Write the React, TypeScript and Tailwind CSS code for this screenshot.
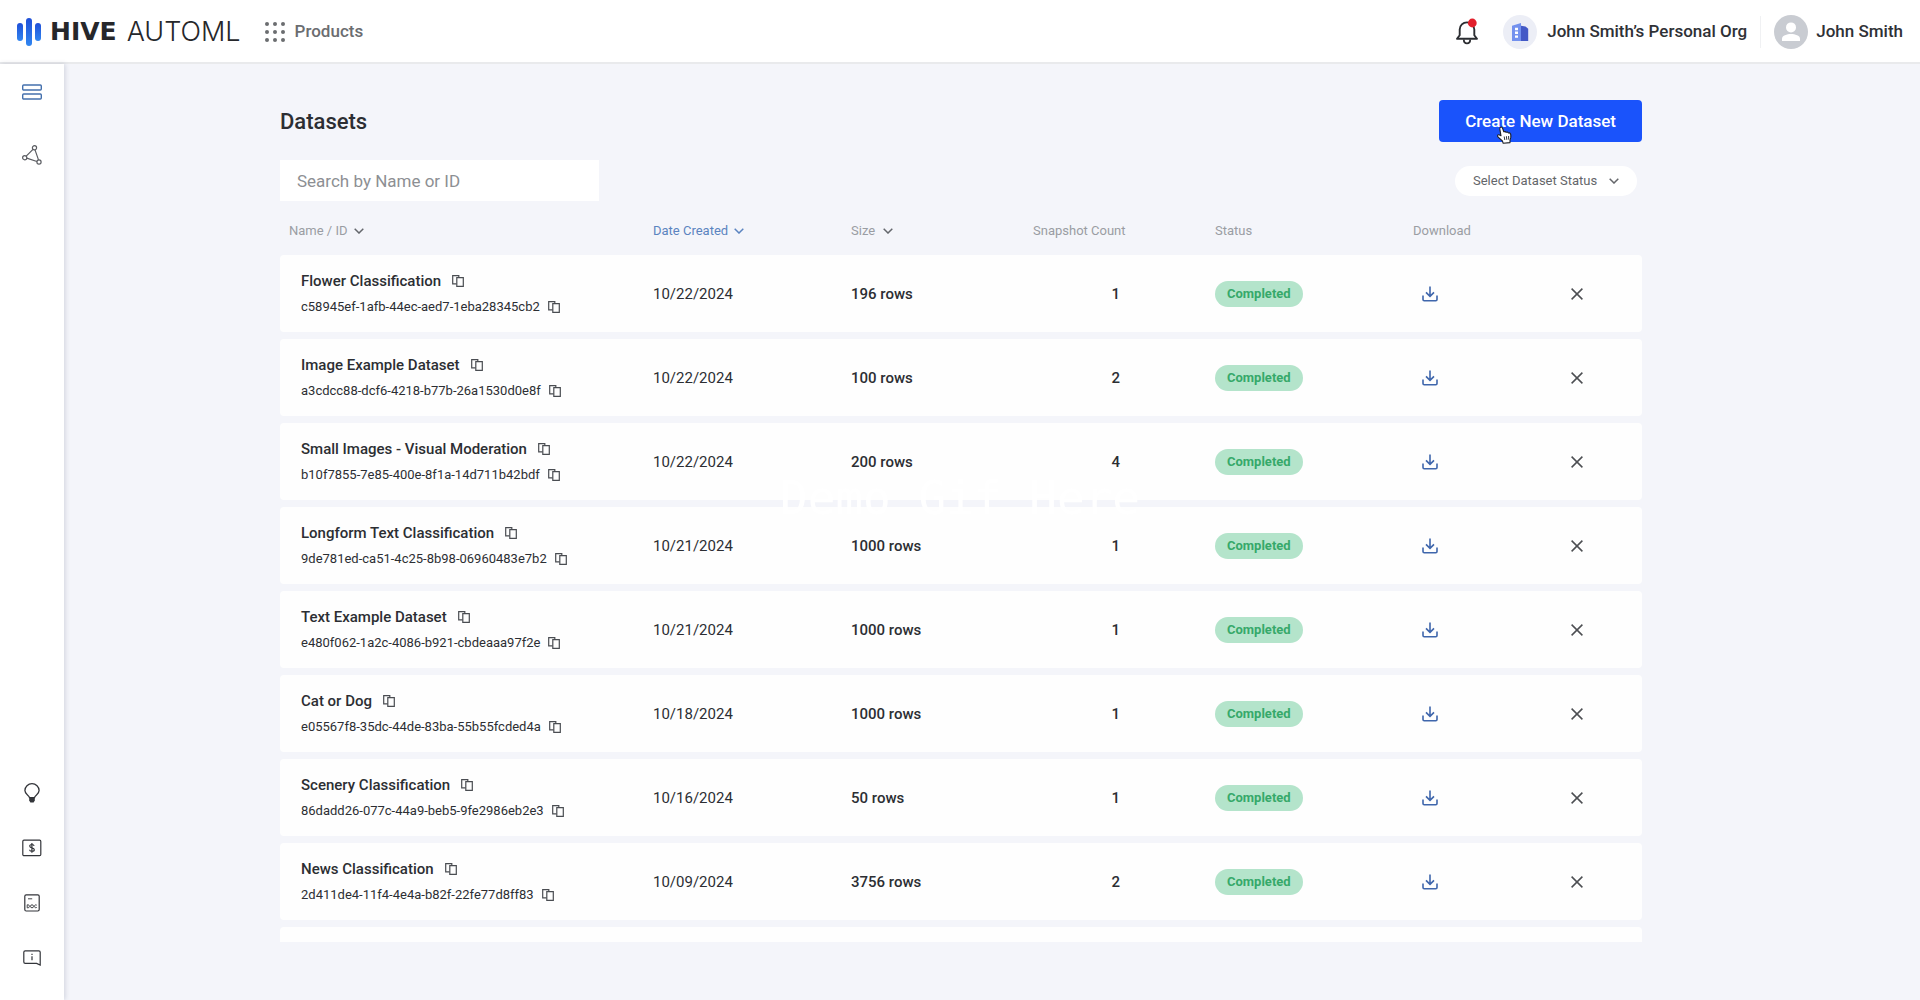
import type { ReactNode } from "react";

type Dataset = {
  name: string;
  id: string;
  created: string;
  rows: number;
  snapshots: number;
};

const DATASETS: Dataset[] = [
  { name: "Flower Classification", id: "c58945ef-1afb-44ec-aed7-1eba28345cb2", created: "10/22/2024", rows: 196, snapshots: 1 },
  { name: "Image Example Dataset", id: "a3cdcc88-dcf6-4218-b77b-26a1530d0e8f", created: "10/22/2024", rows: 100, snapshots: 2 },
  { name: "Small Images - Visual Moderation", id: "b10f7855-7e85-400e-8f1a-14d711b42bdf", created: "10/22/2024", rows: 200, snapshots: 4 },
  { name: "Longform Text Classification", id: "9de781ed-ca51-4c25-8b98-06960483e7b2", created: "10/21/2024", rows: 1000, snapshots: 1 },
  { name: "Text Example Dataset", id: "e480f062-1a2c-4086-b921-cbdeaaa97f2e", created: "10/21/2024", rows: 1000, snapshots: 1 },
  { name: "Cat or Dog", id: "e05567f8-35dc-44de-83ba-55b55fcded4a", created: "10/18/2024", rows: 1000, snapshots: 1 },
  { name: "Scenery Classification", id: "86dadd26-077c-44a9-beb5-9fe2986eb2e3", created: "10/16/2024", rows: 50, snapshots: 1 },
  { name: "News Classification", id: "2d411de4-11f4-4e4a-b82f-22fe77d8ff83", created: "10/09/2024", rows: 3756, snapshots: 2 },
];

function ChevronIcon({ className }: { className?: string }) {
  return (
    <svg viewBox="0 0 10 6" fill="none" stroke="currentColor" strokeWidth="1.5" className={className} aria-hidden="true">
      <path d="M0.7 0.7 5 5 9.3 0.7" />
    </svg>
  );
}

function CopyButton({ label }: { label: string }) {
  return (
    <button type="button" aria-label={label} className="text-[#4a4d52]">
      <svg viewBox="0 0 12 12" fill="none" stroke="currentColor" strokeWidth="1.2" className="size-3" aria-hidden="true">
        <path d="M4.6 8.8H0.7V0.6H6.8V2.6" />
        <path d="M4.8 2.7H11.3V11.3H4.8Z" />
      </svg>
    </button>
  );
}

function SidebarLink({ label, children }: { label: string; children: ReactNode }) {
  return (
    <a href="#" aria-label={label} className="flex size-6 items-center justify-center">
      {children}
    </a>
  );
}

function Header() {
  return (
    <header className="flex h-16 shrink-0 items-center justify-between border-b-2 border-[#e9eaec] bg-white pt-0.5 pr-[17px] pl-4">
      <div className="flex items-center">
        <a href="#" aria-label="Hive AutoML" className="flex items-center leading-8 text-[#26272b]">
          <svg viewBox="0 0 26 28" className="mr-2 h-7 w-[26px]" aria-hidden="true">
            <defs>
              <linearGradient id="hive" x1="0" y1="0" x2="0" y2="1">
                <stop offset="0" stopColor="#1f4fd8" />
                <stop offset="1" stopColor="#3186f0" />
              </linearGradient>
            </defs>
            <rect x="1" y="5" width="6" height="18" rx="3" fill="url(#hive)" />
            <rect x="10" y="0" width="6" height="28" rx="3" fill="url(#hive)" />
            <rect x="19" y="5" width="6" height="18" rx="3" fill="url(#hive)" />
          </svg>
          <span className="mr-2.5 font-[DejaVu_Sans,sans-serif] text-[25px] font-bold">HIVE</span>
          <span className="font-[Inter] text-[27px] font-light">AUTOML</span>
        </a>
        <button type="button" className="ml-6 flex items-center gap-2.5 text-[17px] font-medium text-[#6b6d70]">
          <svg viewBox="0 0 20 20" fill="currentColor" className="size-5" aria-hidden="true">
            {[2, 10, 18].map((y) => [2, 10, 18].map((x) => <circle key={`${x}-${y}`} cx={x} cy={y} r="2" />))}
          </svg>
          Products
        </button>
      </div>

      <div className="flex items-center text-[17px] font-medium text-[#2f3136]">
        <button type="button" aria-label="Notifications" className="mr-6">
          <svg viewBox="0 0 24 28" fill="none" className="h-7 w-6" aria-hidden="true">
            <path d="M2 20.8H22L19.3 17.2V11.6C19.3 7.2 16 4.4 12 4.4S4.7 7.2 4.7 11.6V17.2Z" stroke="#2b2d31" strokeWidth="1.9" strokeLinejoin="round" />
            <path d="M8.8 21.5C8.8 26.6 15.2 26.6 15.2 21.5" stroke="#2b2d31" strokeWidth="1.8" />
            <circle cx="17.3" cy="5" r="4.4" fill="#e2202c" />
          </svg>
        </button>
        <button type="button" className="flex items-center gap-2.5">
          <span className="flex size-[34px] items-center justify-center rounded-full bg-[#eceef6]">
            <svg viewBox="0 0 18 20" className="h-5 w-[18px]" aria-hidden="true">
              <path d="M1 3.8 10 1V19H1Z" fill="#7391ee" />
              <path d="M10 3.8 14.5 4.4 17.2 6.8V19H10Z" fill="#4359c6" />
              <path d="M4 5.8h3v2.4h-3ZM4 9.6h3v2.4h-3ZM4 13.4h3v2.4h-3Z" fill="#fff" />
            </svg>
          </span>
          John Smith’s Personal Org
        </button>
        <span className="mx-[13px] h-8 w-px bg-[#f0f1f3]" />
        <button type="button" className="flex items-center gap-2">
          <svg viewBox="0 0 34 34" className="size-[34px]" aria-hidden="true">
            <circle cx="17" cy="17" r="17" fill="#c9ccd2" />
            <circle cx="17" cy="12.4" r="5" fill="#fff" />
            <path d="M8 26V23.6C8 20.6 13 19 17 19S26 20.6 26 23.6V26Z" fill="#fff" />
          </svg>
          John Smith
        </button>
      </div>
    </header>
  );
}

function Sidebar() {
  return (
    <nav aria-label="Main" className="z-10 flex w-16 shrink-0 flex-col items-center justify-between bg-white pt-4 pb-[30px] text-[#33353a] shadow-[1px_0_5px_rgba(40,50,90,0.18)]">
      <div className="flex flex-col gap-[39px]">
        <SidebarLink label="Datasets">
          <svg viewBox="0 0 20 16" fill="none" stroke="#4470ad" strokeWidth="1.4" className="h-4 w-5" aria-hidden="true">
            <rect x="0.7" y="1" width="18.6" height="5" rx="1" />
            <rect x="0.7" y="10" width="18.6" height="5" rx="1" />
          </svg>
        </SidebarLink>
        <SidebarLink label="Models">
          <svg viewBox="0 0 20 20" fill="none" stroke="#5b5d62" strokeWidth="1.2" className="size-5" aria-hidden="true">
            <circle cx="12.5" cy="2.8" r="2.1" />
            <circle cx="2.7" cy="12.7" r="2.1" />
            <circle cx="17" cy="17" r="2.1" />
            <path d="M11 4.3 4.2 11.2M13 4.9 16.5 14.9M4.8 13.1 14.9 16.5" />
          </svg>
        </SidebarLink>
      </div>
      <div className="flex flex-col gap-[31px]">
        <SidebarLink label="Tips">
          <svg viewBox="0 0 16 20" fill="none" stroke="currentColor" strokeWidth="1.3" className="h-5 w-4" aria-hidden="true">
            <path d="M5.5 14.6C5.2 12 0.9 11.4 0.9 7.6A7.1 6.9 0 0 1 15.1 7.6C15.1 11.4 10.8 12 10.5 14.6Z" />
            <path d="M5.2 14.2H10.8V17.6L9.6 19.4H6.4L5.2 17.6Z" fill="currentColor" stroke="none" />
          </svg>
        </SidebarLink>
        <SidebarLink label="Billing">
          <svg viewBox="0 0 20 18" fill="none" stroke="currentColor" strokeWidth="1.2" className="h-[18px] w-5" aria-hidden="true">
            <rect x="0.8" y="1.2" width="18" height="15.4" rx="1.2" />
            <path d="M12.1 6.9C11.9 5.9 11 5.5 9.9 5.5 8.6 5.5 7.7 6 7.7 7.1 7.7 9.5 12.3 8.1 12.3 10.7 12.3 11.8 11.3 12.3 9.9 12.3 8.6 12.3 7.6 11.8 7.5 10.7M9.9 4V13.8" />
          </svg>
        </SidebarLink>
        <SidebarLink label="Documentation">
          <svg viewBox="0 0 16 18" fill="none" stroke="currentColor" strokeWidth="1.2" className="h-[18px] w-4" aria-hidden="true">
            <rect x="0.8" y="0.8" width="14.4" height="16.2" rx="1.4" />
            <path d="M4 4.8H8.2M3.2 10.8V13.8H4.2C5.8 13.8 5.8 10.8 4.2 10.8ZM12.8 11.2C11.4 10.3 10.6 11 10.6 12.3S11.6 14.3 12.8 13.4" strokeWidth="0.9" />
            <circle cx="8" cy="12.3" r="1.5" strokeWidth="0.9" />
          </svg>
        </SidebarLink>
        <SidebarLink label="Support">
          <svg viewBox="0 0 18 16" fill="none" stroke="currentColor" strokeWidth="1.2" className="h-4 w-[18px]" aria-hidden="true">
            <path d="M2.2 0.8H15.8Q17.2 0.8 17.2 2.2V15L13.6 13.4H2.2Q0.8 13.4 0.8 12V2.2Q0.8 0.8 2.2 0.8Z" />
            <path d="M9 6.2V10.2M9 3.8V5" />
          </svg>
        </SidebarLink>
      </div>
    </nav>
  );
}

function DatasetRow({ dataset }: { dataset: Dataset }) {
  return (
    <tr className="h-[77px] bg-[#fefefe]">
      <td className="rounded-l pl-[21px]">
        <div className="flex items-center gap-[11px]">
          <span className="text-[15px] leading-5 font-medium">{dataset.name}</span>
          <CopyButton label={`Copy name ${dataset.name}`} />
        </div>
        <div className="mt-1.5 flex items-center gap-2">
          <span className="text-[13px] leading-5">{dataset.id}</span>
          <CopyButton label={`Copy ID ${dataset.id}`} />
        </div>
      </td>
      <td className="pt-0.5 text-[15px]">{dataset.created}</td>
      <td className="pt-0.5 text-[15px] font-medium">{dataset.rows} rows</td>
      <td className="pt-0.5 pr-[95px] text-right text-[15px] font-medium">{dataset.snapshots}</td>
      <td>
        <span className="inline-flex h-[26px] items-center rounded-full bg-[#b4e4cb] px-3 text-[13px] font-bold text-[#36a96a]">
          Completed
        </span>
      </td>
      <td className="pl-2">
        <button type="button" aria-label={`Download ${dataset.name}`} className="block text-[#3f66ac]">
          <svg viewBox="0 0 18 18" fill="none" stroke="currentColor" strokeWidth="1.6" className="size-[18px]" aria-hidden="true">
            <path d="M9 1.6V11M5 7.4 9 11.4 13 7.4" />
            <path d="M2 10.4V14.6Q2 15.8 3.2 15.8H14.8Q16 15.8 16 14.6V10.4" />
          </svg>
        </button>
      </td>
      <td className="rounded-r pl-[26px]">
        <button type="button" aria-label={`Delete ${dataset.name}`} className="block text-[#4c4e52]">
          <svg viewBox="0 0 12 12" fill="none" stroke="currentColor" strokeWidth="1.5" className="size-3" aria-hidden="true">
            <path d="M0.6 0.6 11.4 11.4M11.4 0.6 0.6 11.4" />
          </svg>
        </button>
      </td>
    </tr>
  );
}

function DatasetTable() {
  return (
    <table className="w-full table-fixed border-separate border-spacing-x-0 border-spacing-y-[7px] text-left text-[#2c2e33]">
      <colgroup>
        <col className="w-[373px]" />
        <col className="w-[198px]" />
        <col className="w-[182px]" />
        <col className="w-[182px]" />
        <col className="w-[198px]" />
        <col className="w-[132px]" />
        <col className="w-[97px]" />
      </colgroup>
      <thead>
        <tr className="h-10 text-[13px] text-[#9a9da3]">
          <th className="pt-1.5 pl-[9px] font-normal">
            <button type="button" className="flex items-center gap-1.5">
              Name / ID
              <ChevronIcon className="h-1.5 w-2.5 text-[#64676c]" />
            </button>
          </th>
          <th aria-sort="descending" className="pt-1.5 font-normal">
            <button type="button" className="flex items-center gap-1.5 text-[#5b84c0]">
              Date Created
              <ChevronIcon className="h-1.5 w-2.5" />
            </button>
          </th>
          <th className="pt-1.5 font-normal">
            <button type="button" className="flex items-center gap-2">
              Size
              <ChevronIcon className="h-1.5 w-2.5 text-[#64676c]" />
            </button>
          </th>
          <th className="pt-1.5 font-normal">Snapshot Count</th>
          <th className="pt-1.5 font-normal">Status</th>
          <th className="pt-1.5 font-normal">Download</th>
          <td />
        </tr>
      </thead>
      <tbody>
        {DATASETS.map((dataset) => (
          <DatasetRow key={dataset.id} dataset={dataset} />
        ))}
        {/* row still loading below the fold */}
        <tr className="h-[77px] bg-[#fefefe]">
          <td colSpan={7} className="rounded" />
        </tr>
      </tbody>
    </table>
  );
}

function HandCursor() {
  return (
    <svg viewBox="0 0 16 18" className="pointer-events-none absolute top-[26px] left-[57px] h-[18px] w-4" aria-hidden="true">
      <path
        d="M4.6 1.2C5.4 0.8 6.2 1.2 6.5 2L7.8 5.8 9.2 5.5 10 6.3 11.5 6 12.4 7 13.8 6.9C14.8 7.4 15 9.6 14.8 11.4L14 14.2V16.6L7.2 17.2 6.4 15 2.2 11.2C1 9.8 1.6 8.4 3 8.8L5 9.8 3.8 3C3.6 2.2 3.8 1.5 4.6 1.2Z"
        fill="#fff"
        stroke="#1c1f26"
        strokeWidth="1.1"
        strokeLinejoin="round"
      />
      <path d="M8.2 10.5 8.8 14M10.4 10.2 10.8 13.8M12.6 10 12.7 13.6" stroke="#1c1f26" strokeWidth="0.9" />
    </svg>
  );
}

export default function App() {
  return (
    <div className="flex h-screen flex-col bg-[#f4f5fa] font-[Roboto,sans-serif]">
      <Header />
      <div className="flex min-h-0 flex-1">
        <Sidebar />
        <main className="flex min-w-0 flex-1 flex-col pr-[62px] pb-[58px]">
          <div className="mx-auto flex min-h-0 w-full max-w-[1362px] flex-1 flex-col">
            <div className="flex items-center justify-between pt-9">
              <h1 className="text-[22px] font-medium text-[#2c2e33]">Datasets</h1>
              <div className="relative">
                <button type="button" className="h-[42px] rounded bg-[#1a53fb] px-[26px] pt-0.5 text-[17px] font-medium text-white">
                  Create New Dataset
                </button>
                <HandCursor />
              </div>
            </div>

            <div className="mt-[18px] flex items-center justify-between">
              <input
                type="search"
                aria-label="Search by Name or ID"
                placeholder="Search by Name or ID"
                className="h-[41px] w-[319px] bg-white px-[17px] text-[17px] text-[#2c2e33] placeholder:text-[#8d8f93]"
              />
              <div className="relative mr-[5px]">
                <select
                  aria-label="Dataset status"
                  className="h-[30px] w-[182px] appearance-none rounded-full bg-white pl-[18px] text-[13px] text-[#64666a]"
                >
                  <option>Select Dataset Status</option>
                </select>
                <ChevronIcon className="pointer-events-none absolute top-3 right-[18px] h-1.5 w-2.5 text-[#64666a]" />
              </div>
            </div>

            <div className="min-h-0 flex-1 overflow-hidden">
              <DatasetTable />
            </div>
          </div>
        </main>
      </div>

      <p className="pointer-events-none fixed inset-0 z-20 flex items-center justify-center pb-1 font-[DejaVu_Sans_Mono,monospace] text-[46px] text-white">
        Demo Gif Here
      </p>
    </div>
  );
}
